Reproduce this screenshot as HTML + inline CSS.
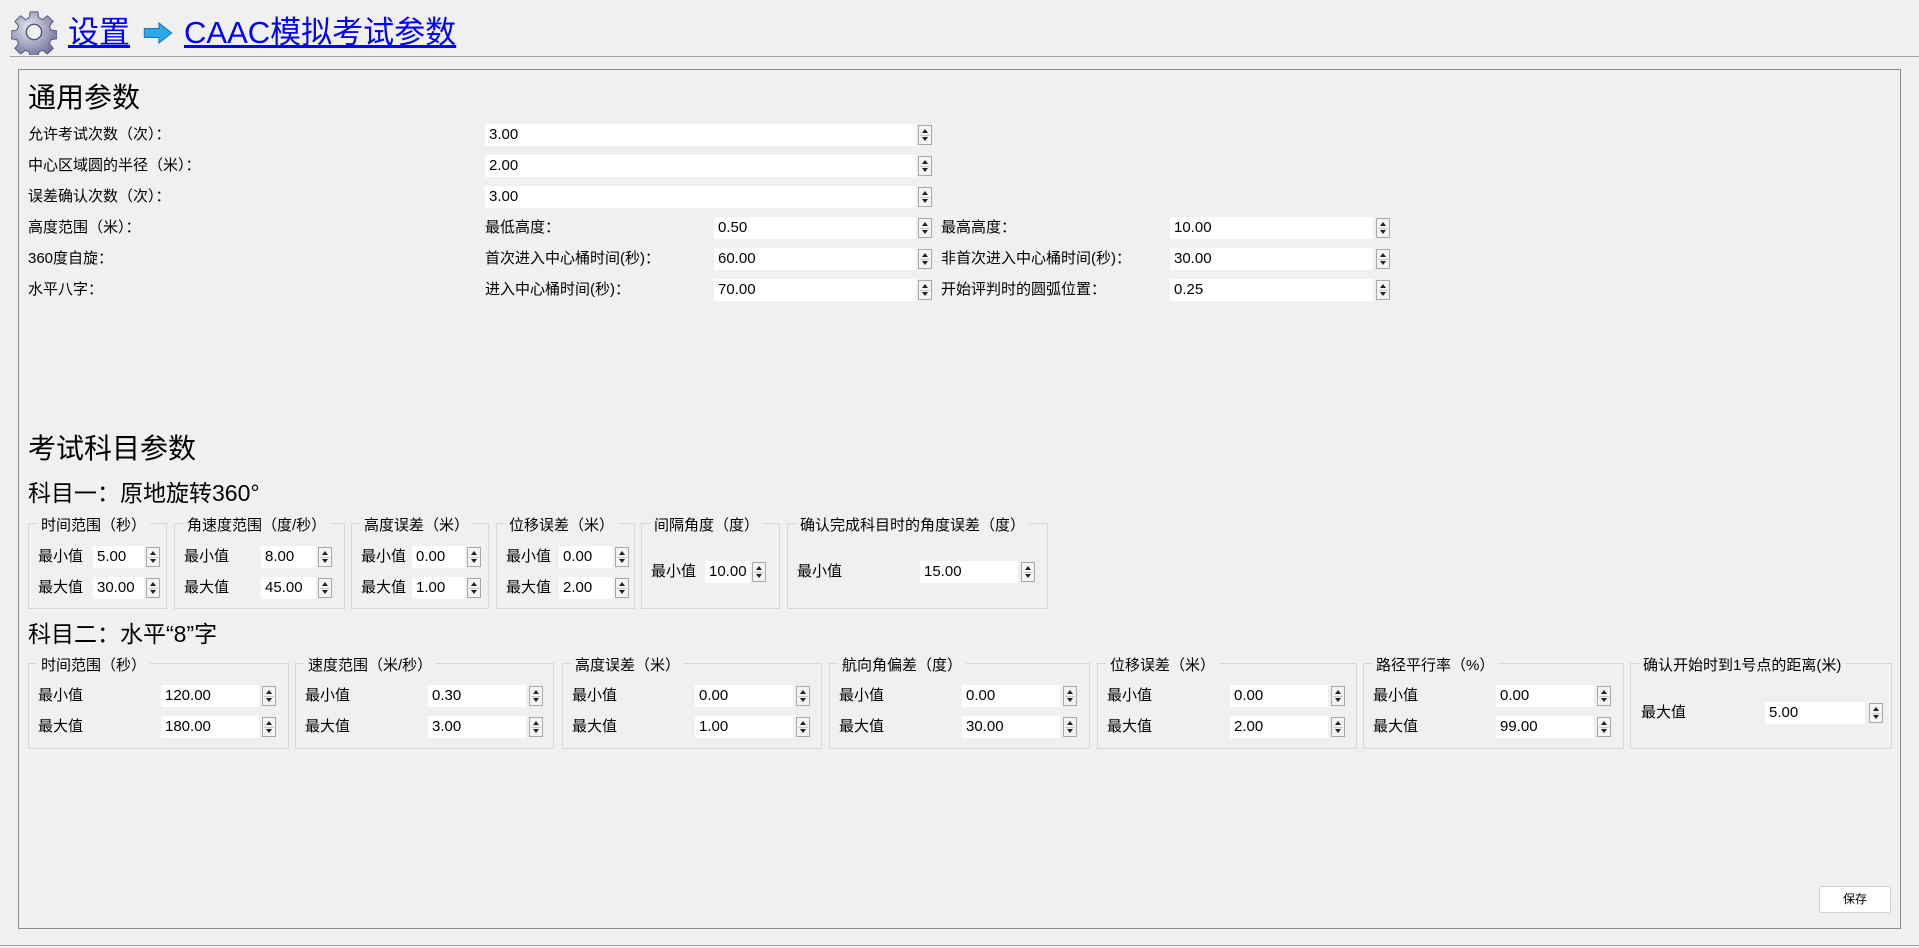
<!DOCTYPE html>
<html><head><meta charset="utf-8"><style>
*{margin:0;padding:0;box-sizing:border-box}
body{width:1919px;height:948px;background:#f0f0f0;font-family:"Liberation Sans","Noto Sans CJK SC",sans-serif;color:#000;position:relative;overflow:hidden;font-size:15px}
.a{position:absolute;white-space:nowrap}
.t{position:absolute;white-space:nowrap;line-height:22px;font-size:15px}
.in{position:absolute;background:#fff;height:22px;line-height:22px;padding-left:4px;font-size:15px}
.sp{position:absolute;width:14px;height:20px;border:1px solid #a8a8a8;background:#f4f4f4}
.sp:before{content:"";position:absolute;left:3px;top:3px;border-left:3px solid transparent;border-right:3px solid transparent;border-bottom:4px solid #222}
.sp:after{content:"";position:absolute;left:3px;bottom:3px;border-left:3px solid transparent;border-right:3px solid transparent;border-top:4px solid #222}
.sp i{position:absolute;left:1px;right:1px;top:9px;border-top:1px solid #c8c8c8}
.g{position:absolute;border:1px solid #d8d8d8}
.lg{position:absolute;top:-9px;left:8px;background:#f0f0f0;padding:0 4px;font-size:15px;line-height:22px;white-space:nowrap}
a{color:#0000ff;text-decoration:underline}
</style></head><body>
<svg class="a" style="left:11px;top:9px" width="46" height="46" viewBox="0 0 48 48">
<defs><radialGradient id="gg" cx="40%" cy="35%" r="70%"><stop offset="0" stop-color="#e8e8f4"/><stop offset="1" stop-color="#6a6a98"/></radialGradient></defs>
<path fill="url(#gg)" stroke="#55557a" stroke-width="1" d="M20,3h8l1,6 4,2 5-4 6,6-4,5 2,4 6,1v8l-6,1-2,4 4,5-6,6-5-4-4,2-1,6h-8l-1-6-4-2-5,4-6-6 4-5-2-4-6-1v-8l6-1 2-4-4-5 6-6 5,4 4-2z"/>
<circle cx="24" cy="24" r="8" fill="#f0f0f0" stroke="#55557a" stroke-width="1.5"/>
</svg>
<div class="a" style="left:68px;top:13px;font-size:31px;line-height:40px"><a>设置</a></div>
<svg class="a" style="left:142px;top:22px" width="32" height="22" viewBox="0 0 34 24"><path d="M2,7h16V1l14,11-14,11v-6H2z" fill="#2aa8e8" stroke="#1a6fb0" stroke-width="1"/></svg>
<div class="a" style="left:184px;top:13px;font-size:31px;line-height:40px"><a>CAAC模拟考试参数</a></div>
<div class="a" style="left:10px;top:56px;width:1909px;border-top:1px solid #a0a0a0"></div>
<div class="a" style="left:18px;top:69px;width:1883px;height:860px;border:1px solid #8c8c8c"></div>
<div class="a" style="left:0;top:945px;width:1919px;border-top:1px solid #a0a0a0"></div>

<div class="a" style="left:28px;top:80px;font-size:28px;line-height:36px">通用参数</div>
<div class="t" style="left:28px;top:124px">允许考试次数（次）：</div>
<div class="in" style="left:485px;top:124px;width:431px">3.00</div><div class="sp" style="left:918px;top:125px"><i></i></div>
<div class="t" style="left:28px;top:155px">中心区域圆的半径（米）：</div>
<div class="in" style="left:485px;top:155px;width:431px">2.00</div><div class="sp" style="left:918px;top:156px"><i></i></div>
<div class="t" style="left:28px;top:186px">误差确认次数（次）：</div>
<div class="in" style="left:485px;top:186px;width:431px">3.00</div><div class="sp" style="left:918px;top:187px"><i></i></div>

<div class="t" style="left:28px;top:217px">高度范围（米）：</div>
<div class="t" style="left:485px;top:217px">最低高度：</div>
<div class="in" style="left:714px;top:217px;width:202px">0.50</div><div class="sp" style="left:918px;top:218px"><i></i></div>
<div class="t" style="left:941px;top:217px">最高高度：</div>
<div class="in" style="left:1170px;top:217px;width:203px">10.00</div><div class="sp" style="left:1376px;top:218px"><i></i></div>

<div class="t" style="left:28px;top:248px">360度自旋：</div>
<div class="t" style="left:485px;top:248px">首次进入中心桶时间(秒)：</div>
<div class="in" style="left:714px;top:248px;width:202px">60.00</div><div class="sp" style="left:918px;top:249px"><i></i></div>
<div class="t" style="left:941px;top:248px">非首次进入中心桶时间(秒)：</div>
<div class="in" style="left:1170px;top:248px;width:203px">30.00</div><div class="sp" style="left:1376px;top:249px"><i></i></div>

<div class="t" style="left:28px;top:279px">水平八字：</div>
<div class="t" style="left:485px;top:279px">进入中心桶时间(秒)：</div>
<div class="in" style="left:714px;top:279px;width:202px">70.00</div><div class="sp" style="left:918px;top:280px"><i></i></div>
<div class="t" style="left:941px;top:279px">开始评判时的圆弧位置：</div>
<div class="in" style="left:1170px;top:279px;width:203px">0.25</div><div class="sp" style="left:1376px;top:280px"><i></i></div>

<div class="a" style="left:28px;top:431px;font-size:28px;line-height:36px">考试科目参数</div>
<div class="a" style="left:28px;top:477px;font-size:23px;line-height:32px">科目一：原地旋转360°</div>

<div class="g" style="left:28px;top:523px;width:139px;height:86px"><div class="lg">时间范围（秒）</div></div>
<div class="t" style="left:38px;top:546px">最小值</div><div class="in" style="left:93px;top:546px;width:51px">5.00</div><div class="sp" style="left:146px;top:547px"><i></i></div>
<div class="t" style="left:38px;top:577px">最大值</div><div class="in" style="left:93px;top:577px;width:51px">30.00</div><div class="sp" style="left:146px;top:578px"><i></i></div>

<div class="g" style="left:174px;top:523px;width:171px;height:86px"><div class="lg">角速度范围（度/秒）</div></div>
<div class="t" style="left:184px;top:546px">最小值</div><div class="in" style="left:261px;top:546px;width:55px">8.00</div><div class="sp" style="left:318px;top:547px"><i></i></div>
<div class="t" style="left:184px;top:577px">最大值</div><div class="in" style="left:261px;top:577px;width:55px">45.00</div><div class="sp" style="left:318px;top:578px"><i></i></div>

<div class="g" style="left:351px;top:523px;width:138px;height:86px"><div class="lg">高度误差（米）</div></div>
<div class="t" style="left:361px;top:546px">最小值</div><div class="in" style="left:412px;top:546px;width:53px">0.00</div><div class="sp" style="left:467px;top:547px"><i></i></div>
<div class="t" style="left:361px;top:577px">最大值</div><div class="in" style="left:412px;top:577px;width:53px">1.00</div><div class="sp" style="left:467px;top:578px"><i></i></div>

<div class="g" style="left:496px;top:523px;width:139px;height:86px"><div class="lg">位移误差（米）</div></div>
<div class="t" style="left:506px;top:546px">最小值</div><div class="in" style="left:559px;top:546px;width:54px">0.00</div><div class="sp" style="left:615px;top:547px"><i></i></div>
<div class="t" style="left:506px;top:577px">最大值</div><div class="in" style="left:559px;top:577px;width:54px">2.00</div><div class="sp" style="left:615px;top:578px"><i></i></div>

<div class="g" style="left:641px;top:523px;width:139px;height:86px"><div class="lg">间隔角度（度）</div></div>
<div class="t" style="left:651px;top:561px">最小值</div><div class="in" style="left:705px;top:561px;width:45px">10.00</div><div class="sp" style="left:752px;top:562px"><i></i></div>

<div class="g" style="left:787px;top:523px;width:261px;height:86px"><div class="lg">确认完成科目时的角度误差（度）</div></div>
<div class="t" style="left:797px;top:561px">最小值</div><div class="in" style="left:920px;top:561px;width:98px">15.00</div><div class="sp" style="left:1021px;top:562px"><i></i></div>

<div class="a" style="left:28px;top:618px;font-size:23px;line-height:32px">科目二：水平“8”字</div>

<div class="g" style="left:28px;top:663px;width:261px;height:86px"><div class="lg">时间范围（秒）</div></div>
<div class="t" style="left:38px;top:685px">最小值</div><div class="in" style="left:161px;top:685px;width:98px">120.00</div><div class="sp" style="left:262px;top:686px"><i></i></div>
<div class="t" style="left:38px;top:716px">最大值</div><div class="in" style="left:161px;top:716px;width:98px">180.00</div><div class="sp" style="left:262px;top:717px"><i></i></div>

<div class="g" style="left:295px;top:663px;width:259px;height:86px"><div class="lg">速度范围（米/秒）</div></div>
<div class="t" style="left:305px;top:685px">最小值</div><div class="in" style="left:428px;top:685px;width:98px">0.30</div><div class="sp" style="left:529px;top:686px"><i></i></div>
<div class="t" style="left:305px;top:716px">最大值</div><div class="in" style="left:428px;top:716px;width:98px">3.00</div><div class="sp" style="left:529px;top:717px"><i></i></div>

<div class="g" style="left:562px;top:663px;width:260px;height:86px"><div class="lg">高度误差（米）</div></div>
<div class="t" style="left:572px;top:685px">最小值</div><div class="in" style="left:695px;top:685px;width:98px">0.00</div><div class="sp" style="left:796px;top:686px"><i></i></div>
<div class="t" style="left:572px;top:716px">最大值</div><div class="in" style="left:695px;top:716px;width:98px">1.00</div><div class="sp" style="left:796px;top:717px"><i></i></div>

<div class="g" style="left:829px;top:663px;width:261px;height:86px"><div class="lg">航向角偏差（度）</div></div>
<div class="t" style="left:839px;top:685px">最小值</div><div class="in" style="left:962px;top:685px;width:98px">0.00</div><div class="sp" style="left:1063px;top:686px"><i></i></div>
<div class="t" style="left:839px;top:716px">最大值</div><div class="in" style="left:962px;top:716px;width:98px">30.00</div><div class="sp" style="left:1063px;top:717px"><i></i></div>

<div class="g" style="left:1097px;top:663px;width:260px;height:86px"><div class="lg">位移误差（米）</div></div>
<div class="t" style="left:1107px;top:685px">最小值</div><div class="in" style="left:1230px;top:685px;width:98px">0.00</div><div class="sp" style="left:1331px;top:686px"><i></i></div>
<div class="t" style="left:1107px;top:716px">最大值</div><div class="in" style="left:1230px;top:716px;width:98px">2.00</div><div class="sp" style="left:1331px;top:717px"><i></i></div>

<div class="g" style="left:1363px;top:663px;width:261px;height:86px"><div class="lg">路径平行率（%）</div></div>
<div class="t" style="left:1373px;top:685px">最小值</div><div class="in" style="left:1496px;top:685px;width:98px">0.00</div><div class="sp" style="left:1597px;top:686px"><i></i></div>
<div class="t" style="left:1373px;top:716px">最大值</div><div class="in" style="left:1496px;top:716px;width:98px">99.00</div><div class="sp" style="left:1597px;top:717px"><i></i></div>

<div class="g" style="left:1630px;top:663px;width:262px;height:86px"><div class="lg">确认开始时到1号点的距离(米)</div></div>
<div class="t" style="left:1641px;top:702px">最大值</div><div class="in" style="left:1765px;top:702px;width:100px">5.00</div><div class="sp" style="left:1869px;top:703px"><i></i></div>

<div class="a" style="left:1819px;top:886px;width:72px;height:27px;background:#fff;border:1px solid #cfcfcf;border-radius:3px;font-size:12px;line-height:25px;text-align:center">保存</div>
</body></html>
